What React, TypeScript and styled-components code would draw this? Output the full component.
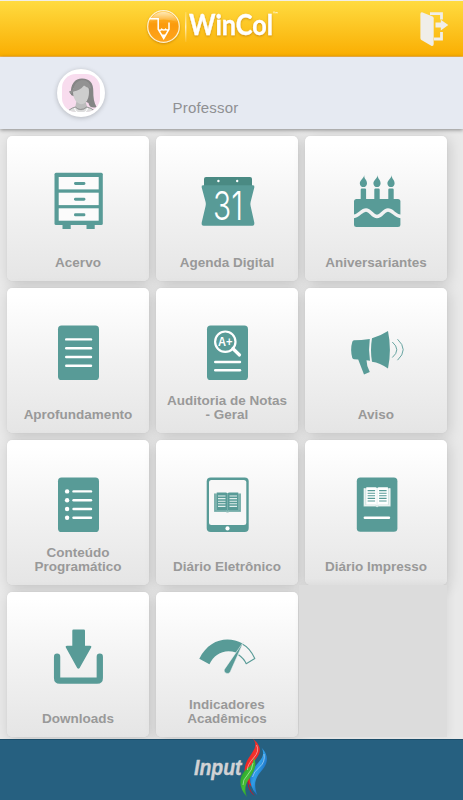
import React from 'react';
import styled, { createGlobalStyle } from 'styled-components';

const TEAL = '#589b97';

const GlobalStyle = createGlobalStyle`
  *, *::before, *::after { box-sizing: border-box; }
  body {
    margin: 0;
    background: #ebebeb;
    font-family: 'Liberation Sans', Arial, Helvetica, sans-serif;
  }
`;

const Screen = styled.div`
  display: flex;
  flex-direction: column;
  width: 463px;
  height: 800px;
  overflow: hidden;
  background: #e9e9e9;
`;

const Header = styled.header`
  display: flex;
  align-items: center;
  justify-content: space-between;
  flex: none;
  height: 57px;
  padding: 0 12px 1px 144px;
  border-top: 1px solid #f1eee6;
  border-bottom: 1px solid #fbb94c;
  background: linear-gradient(#ffdb40, #faae02);
`;

const Brand = styled.svg`
  display: block;
  width: 136px;
  height: 46px;
`;

const ExitButton = styled.button`
  width: 34px;
  height: 40px;
  padding: 0;
  border: 0;
  background: none;

  svg { display: block; }
`;

const Profile = styled.section`
  position: relative;
  z-index: 1;
  display: flex;
  flex: none;
  height: 72px;
  padding: 12px 0 0 57px;
  background: #e6eaf2;
  box-shadow: 0 1px 4px rgba(0, 0, 0, 0.42);
`;

const Avatar = styled.div`
  width: 48px;
  height: 48px;
  padding: 5px;
  border-radius: 50%;
  background: #fff;
  box-shadow: 0 1px 5px rgba(0, 0, 0, 0.22);

  svg { display: block; border-radius: 14px; }
`;

const Role = styled.span`
  margin: 30px 0 0 67.5px;
  font-size: 15px;
  line-height: 18px;
  letter-spacing: 0.2px;
  color: #8f9093;
`;

const Grid = styled.main`
  display: grid;
  flex: none;
  grid-template-columns: repeat(3, 142px);
  grid-auto-rows: 144.5px;
  gap: 7.5px 7px;
  height: 610px;
  padding: 7px 0 0 7px;
`;

const Card = styled.a`
  display: flex;
  flex-direction: column;
  align-items: center;
  justify-content: space-between;
  padding: 30px 6px 11px;
  border-radius: 5px;
  background: linear-gradient(#ffffff 5%, #f2f2f2 50%, #e5e5e5);
  box-shadow: 0 0 1px rgba(0, 0, 0, 0.14), 2px 3px 14px rgba(0, 0, 0, 0.15);
`;

const EmptyCell = styled.div`
  margin: -7px 0 0 -6px;
  background: #dcdcdc;
  box-shadow: 2px 0 8px rgba(0, 0, 0, 0.06);
`;

const CardIcon = styled.svg`
  display: block;
  flex: none;
  width: 80px;
  height: 72px;
`;

const Label = styled.span`
  font-size: 13.5px;
  font-weight: 700;
  line-height: 13.6px;
  text-align: center;
  white-space: pre-line;
  color: #999;
`;

const Footer = styled.footer`
  display: flex;
  flex: none;
  justify-content: center;
  height: 61px;
  padding-right: 3px;
  background: #266080;
  box-shadow: inset 0 1px #1c4d69;

  svg { display: block; }
`;

const Lines = ({ x, ys }: { x: number; ys: number[] }) => (
  <g stroke="#fff" strokeWidth="2.4" strokeLinecap="round">
    {ys.map((y) => (
      <path key={y} d={`M${x + 1.2} ${y}H84`} />
    ))}
  </g>
);

const Sheet = () => <rect x="51" y="37.6" width="41" height="54.4" rx="3.6" />;

const Cabinet = () => (
  <>
    <rect x="47.5" y="36.7" width="48.3" height="52.3" rx="1.5" />
    <path d="M55.5 88h8.2v5h-8.2zM79.5 88h8.2v5h-8.2z" />
    {[41, 56.7, 72.3].map((y) => (
      <React.Fragment key={y}>
        <rect x="51.7" y={y} width="40" height="12.4" fill="#fbfbfb" />
        <rect x="67" y={y + 5} width="11.4" height="3" rx="1.4" />
      </React.Fragment>
    ))}
  </>
);

const Calendar = () => (
  <>
    <path d="M48 51v-8q0-2 2-2h44q2 0 2 2v8z" fill="#4a8a83" />
    <path d="M47 49.3h50q1.8 0 1.3 2.2L94.6 66q-.5 2 0 4l3.7 16.500q.4 3.200-2 3.200H47.700q-2.500 0-2-3.200L49.600 70q.5-2 0-4L45.700 51.500q-.5-2.200 1.300-2.200z" />
    <circle cx="62.4" cy="45" r="1.2" fill="#fff" />
    <circle cx="81.2" cy="45" r="1.2" fill="#fff" />
    <text x="57" y="84" textLength="30" lengthAdjust="spacingAndGlyphs" fontFamily="Inter, 'Liberation Sans', sans-serif" fontWeight="300" fontSize="40" fill="#fff">31</text>
  </>
);

const Cake = () => (
  <>
    <rect x="49" y="63" width="46.4" height="28" rx="2.5" />
    {[58.4, 72, 86].map((x) => (
      <React.Fragment key={x}>
        <path d={`M${x - 2.7} 64V53.800q0-1.200 1.200-1.200h3q1.200 0 1.200 1.200V64z`} />
        <path d={`M${x + 0.9} 39C${x + 0.4} 43 ${x + 3.6} 43.500 ${x + 3.6} 47.400C${x + 3.400} 52.300 ${x - 3.400} 52.300 ${x - 3.600} 47.400C${x - 3.600} 44 ${x + 0.400} 42.500 ${x + 0.900} 39z`} />
      </React.Fragment>
    ))}
    <path d="M48 80.500C54 80.500 56 74 61 74S67 80.500 72 80.500S78 74 83 74S90 80.500 96.500 80.500" fill="none" stroke="#f2f2f2" strokeWidth="3.4" />
  </>
);

const Document = () => (
  <>
    <Sheet />
    <Lines x={58} ys={[51.4, 60.2, 69, 77.8]} />
  </>
);

const Audit = () => (
  <>
    <Sheet />
    <g fill="none" stroke="#fff">
      <circle cx="69.3" cy="53.7" r="10.2" strokeWidth="2.2" />
      <path d="M76.800 60.500L83.500 67" strokeWidth="3.2" strokeLinecap="round" />
    </g>
    <text x="62" y="57.800" textLength="14.500" lengthAdjust="spacingAndGlyphs" fontFamily="'Liberation Sans', sans-serif" fontWeight="700" fontSize="12" fill="#fff">A+</text>
    <Lines x={58} ys={[74, 82.300]} />
  </>
);

const Megaphone = () => (
  <>
    <path d="M49 52.300Q56 52.300 64.800 51Q63.200 61.700 65 72.800L61.500 72.300Q61.500 78 64.800 84L59 86.400L53.200 71.600L49 71.200Q47.700 71 47.300 70Q45 61.700 47.300 53.800Q47.800 52.400 49 52.300z" />
    <path d="M67 50.200Q75 48 83 42.900Q86.800 61.700 83 80.500Q75 75 67 73.800Q65 62 67 50.200z" />
    <path d="M87.300 54q9 7.800 0 15.500M92.500 51.200q11.400 10.500 0 21" fill="none" stroke={TEAL} strokeWidth="0.9" />
  </>
);

const BulletList = () => (
  <>
    <Sheet />
    <Lines x={65.300} ys={[51.400, 60.200, 69, 77.800]} />
    {[51.400, 60.200, 69, 77.800].map((y) => (
      <circle key={y} cx="60.100" cy={y} r="2.200" fill="#fff" />
    ))}
  </>
);

const Book = ({ x, y, page, ink, edge }: { x: number; y: number; page: string; ink: string; edge: string }) => (
  <g transform={`translate(${x} ${y})`}>
    <path d="M0 1h27v18.300H15q-1.500 1.400-3 0H0z" fill={edge} />
    <path d="M1 1V18.200H12M26 1V18.200H15" fill="none" stroke={page} strokeWidth=".6" />
    <path d="M2.700 0H12q1.500.2 1.500 1.300Q13.500.2 15 0h9.300v17.300H15q-1.500.2-1.500 1.300-.2-1.100-1.500-1.300H2.700z" fill={page} />
    <path d="M13.500 1v17" stroke={edge} strokeWidth=".6" />
    <path d="M4 3.400h7.500M4 6h7.500M4 8.600h7.500M4 11.200h7.500M4 13.800h7.500M15.500 3.400H23M15.500 6H23M15.500 8.600H23M15.500 11.200H23M15.500 13.800H23" stroke={ink} strokeWidth="1.100" />
  </g>
);

const Tablet = () => (
  <>
    <rect x="50.700" y="37.600" width="42" height="54.400" rx="4" />
    <rect x="53" y="40" width="37.300" height="45" rx="2.500" fill="#f7f7f7" />
    <circle cx="71.500" cy="88.400" r="2.100" fill="#fff" />
    <Book x={58} y={52.600} page={TEAL} ink="#e2efed" edge="#8dbbb7" />
  </>
);

const PrintedBook = () => (
  <>
    <rect x="51.800" y="37.600" width="40.600" height="54.200" rx="3.600" />
    <Book x={58.600} y={47.200} page="#fff" ink={TEAL} edge="#d5e6e4" />
    <Lines x={58.600} ys={[77.800]} />
  </>
);

const Download = () => (
  <>
    <path d="M66.500 37.600h10.300q1.200 0 1.200 1.200V53.800h5q2 .2 1 2L72.600 76q-1.200 1.500-2.400 0L59 55.800q-1-1.800 1-2h5.300v-15q0-1.200 1.200-1.200z" />
    <path d="M50 64.700V86q0 2.600 2.600 2.600h37.500q2.600 0 2.600-2.600V64.700" transform="translate(.1)" fill="none" stroke={TEAL} strokeWidth="6.300" strokeLinecap="round" />
  </>
);

const Gauge = () => (
  <>
    <path d="M43.300 66.800C53 47.500 71 43.500 86.700 51.400L80 60.600C69 56.500 58.500 61.500 53.400 72.300z" />
    <path d="M86.300 52Q94 56 98.800 66.500L90.200 71.700Q88 66.500 82.500 62.700" fill="none" stroke={TEAL} strokeWidth="1.100" strokeLinejoin="round" />
    <path d="M87.700 49.500L74.300 79.700C73 83 67.200 81.200 68.400 77.400z" stroke="#f5f5f5" strokeWidth=".5" />
  </>
);

interface Item {
  label: string;
  Icon: () => React.ReactElement;
}

const items: Item[] = [
  { label: 'Acervo', Icon: Cabinet },
  { label: 'Agenda Digital', Icon: Calendar },
  { label: 'Aniversariantes', Icon: Cake },
  { label: 'Aprofundamento', Icon: Document },
  { label: 'Auditoria de Notas\n- Geral', Icon: Audit },
  { label: 'Aviso', Icon: Megaphone },
  { label: 'Conteúdo\nProgramático', Icon: BulletList },
  { label: 'Diário Eletrônico', Icon: Tablet },
  { label: 'Diário Impresso', Icon: PrintedBook },
  { label: 'Downloads', Icon: Download },
  { label: 'Indicadores\nAcadêmicos', Icon: Gauge },
];

const WinColLogo = () => (
  <Brand viewBox="144 5 136 46">
    <defs>
      <linearGradient id="badge" x1="0" y1="0" x2="0" y2="1">
        <stop offset="0" stopColor="#ffc234" />
        <stop offset=".45" stopColor="#fb9a0c" />
        <stop offset="1" stopColor="#ffa51e" />
      </linearGradient>
      <linearGradient id="gloss" x1="0" y1="0" x2="0" y2="1">
        <stop offset="0" stopColor="#fff" stopOpacity=".65" />
        <stop offset="1" stopColor="#fff" stopOpacity=".05" />
      </linearGradient>
      <linearGradient id="divider" x1="0" y1="0" x2="0" y2="1">
        <stop offset="0" stopColor="#fff" stopOpacity=".2" />
        <stop offset=".5" stopColor="#fff" />
        <stop offset="1" stopColor="#fff" stopOpacity=".1" />
      </linearGradient>
      <filter id="soft" x="-20%" y="-20%" width="140%" height="150%">
        <feDropShadow dx="0" dy="1" stdDeviation="1" floodColor="#a86400" floodOpacity=".55" />
      </filter>
    </defs>
    <circle cx="163.500" cy="26.500" r="15.800" fill="url(#badge)" stroke="#fff3d2" strokeWidth="1.2" filter="url(#soft)" />
    <path d="M149.500 22A14.700 14.700 0 0 1 177.500 22Q164 17 149.500 22z" fill="url(#gloss)" />
    <path d="M149.500 18.700h8.700v10.500l5.500 9.200 5.300-9.200v-6.700M158.200 29.500q2.300 1.700 3.600-.3 2 1.700 3.800 0 1.500 1.700 3.400 0" fill="none" stroke="#fff" strokeWidth="1.500" />
    <path d="M161.600 34.500h4.200l-2.100 3.700z" fill="#fff" />
    <rect x="185.300" y="12" width="1" height="30" fill="url(#divider)" />
    <text x="189" y="35" textLength="84" lengthAdjust="spacingAndGlyphs" fontFamily="Lato, 'Noto Sans', sans-serif" fontWeight="700" fontSize="29" fill="#fff" stroke="#fff" strokeWidth=".3" filter="url(#soft)">WinCol</text>
    <path d="M273 12h2M274 12v1.500M275.800 13.500v-1.500l.7 1 .7-1v1.500" fill="none" stroke="#fff" strokeWidth=".5" />
  </Brand>
);

const ExitIcon = () => (
  <svg width="34" height="40" viewBox="417 8.500 34 40">
    <path d="M430 14.200h11.500V20M441.500 32.500v7H434" fill="none" stroke="#f0eee9" strokeWidth="2.800" />
    <path d="M422 12.800l10.700 4.300q1 .5 1 1.700V44.500q0 2.300-2 2L421.400 40.500q-1-.7-1-2V14.500q0-1.800 1.600-1.700z" fill="#f0eee9" />
    <path d="M435.500 23h5.300v-2.700l7.500 5.300-7.500 5.400v-3h-5.300z" fill="#f0eee9" />
  </svg>
);

const Portrait = () => (
  <svg width="38" height="38" viewBox="0 0 38 38">
    <path d="M5 0h28l5 5v28l-5 5H5l-5-5V5z" fill="#f8dcee" />
    <path d="M9 21C8 10 13 4.500 20 4.500c8 0 11.500 5 11.300 13-.1 6 .8 11.200 3.200 15.500-4 1.500-7.500 0-8-4z" fill="#858585" />
    <path d="M5.500 38q.5-3.200 8.200-5.500h11.500q7.300 2.500 8 5.500z" fill="#ddd" />
    <path d="M14.500 27h9l1.700 6.500q-6 5.500-12 0z" fill="#bcbcbc" />
    <path d="M11 18q0-8 9-8 7 0 7 8 0 7-3.500 10.500-4 3.500-8 0Q11 25 11 18z" fill="#cdcdcd" />
    <path d="M7 17.500q4.500-1 5-5 2-5.500 8-6.500 8 0 9 8.500-5-1-7-3-4 5-10.500 6l-3 2.800z" fill="#929292" />
    <path d="M6.500 36.500q4-3 6.800-3.500 5 5 11.500 0 4.500 1 7.500 3.700" fill="none" stroke="#888" strokeWidth=".8" />
    <path d="M12.500 34q.5 3.500 3 4M25.500 34q-.5 3.500-3 4" fill="none" stroke="#fff" strokeWidth="1" />
  </svg>
);

const InputLogo = () => (
  <svg width="84" height="61" viewBox="188 739 84 61">
    <defs>
      <linearGradient id="red" x1="0" y1="0" x2="1" y2="1">
        <stop offset="0" stopColor="#e81410" />
        <stop offset=".5" stopColor="#f3322e" />
        <stop offset="1" stopColor="#a30e18" />
      </linearGradient>
      <linearGradient id="blue" x1="0" y1="0" x2="1" y2="1">
        <stop offset="0" stopColor="#0a35a0" />
        <stop offset=".45" stopColor="#2f9fe8" />
        <stop offset="1" stopColor="#082d91" />
      </linearGradient>
      <linearGradient id="green" x1="0" y1="0" x2="1" y2="1">
        <stop offset="0" stopColor="#0a8f20" />
        <stop offset=".5" stopColor="#44bd35" />
        <stop offset="1" stopColor="#077519" />
      </linearGradient>
    </defs>
    <text x="194" y="775" textLength="47.500" lengthAdjust="spacingAndGlyphs" fontFamily="'Liberation Sans', Arial, sans-serif" fontStyle="italic" fontWeight="700" fontSize="21.500" fill="#d2d2d4" stroke="#d2d2d4" strokeWidth=".4">Input</text>
    <path d="M253.200 739C262 746 261.500 753 255.500 759.500C249 767 247 775 252 787C243 779 243 768 247.500 760C252.500 751 258.500 747 253.200 739z" fill="url(#red)" />
    <path d="M249 779.500Q247 788 255 796Q248.500 792 247.500 783z" fill="#c7152b" />
    <path d="M261.500 747.500C268.500 755 268.500 762 263 769C256 777 252.500 783 257.500 795.500C249.500 787 248 776.500 253 769C259 760.500 266.500 757 261.500 747.500z" fill="url(#blue)" />
    <path d="M253.500 757C258 765 253.500 773 249 779C244.500 785 244.500 791 247 797C240 789 238.500 781 242.500 774C247.500 766.500 254.500 765.500 253.500 757z" fill="url(#green)" />
    <path d="M256.500 745Q260 751 253.500 758T247.500 770M264 754Q265.500 762 259.500 767T252.500 777M253 763Q252.500 770 247.500 775T243 785" fill="none" stroke="#fff" strokeOpacity=".5" strokeWidth=".9" />
  </svg>
);

export default function App() {
  return (
    <Screen>
      <GlobalStyle />
      <Header>
        <WinColLogo />
        <ExitButton aria-label="Sair">
          <ExitIcon />
        </ExitButton>
      </Header>
      <Profile>
        <Avatar>
          <Portrait />
        </Avatar>
        <Role>Professor</Role>
      </Profile>
      <Grid>
        {items.map(({ label, Icon }) => (
          <Card key={label}>
            <CardIcon viewBox="31 30 80 72" fill={TEAL}>
              <Icon />
            </CardIcon>
            <Label>{label}</Label>
          </Card>
        ))}
        <EmptyCell />
      </Grid>
      <Footer>
        <InputLogo />
      </Footer>
    </Screen>
  );
}
